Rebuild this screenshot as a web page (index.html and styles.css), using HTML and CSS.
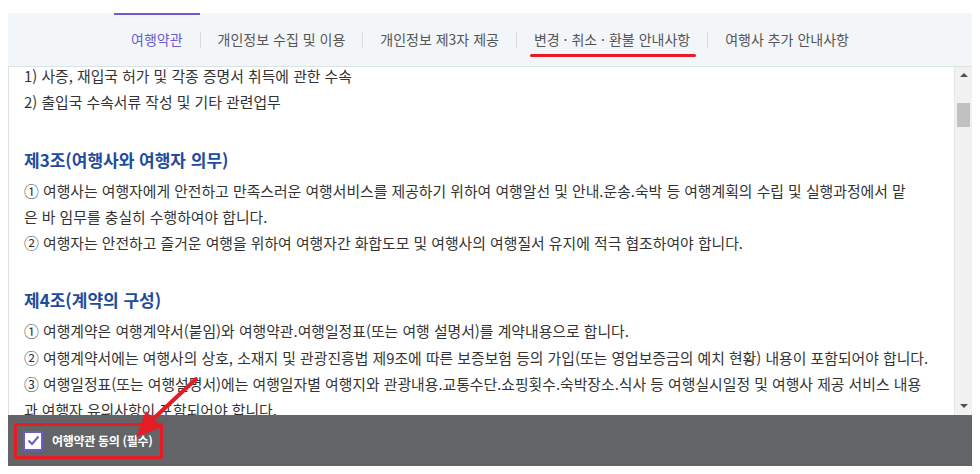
FILE: index.html
```html
<!DOCTYPE html>
<html lang="ko">
<head>
    <meta charset="UTF-8">
    <title>여행약관</title>
    <link rel="stylesheet" href="styles.css">
</head>
<body>
<div class="terms">
    <div class="tabs">
        <a class="tab active">여행약관</a>
        <span class="sep"></span>
        <a class="tab">개인정보 수집 및 이용</a>
        <span class="sep"></span>
        <a class="tab">개인정보 제3자 제공</a>
        <span class="sep"></span>
        <a class="tab marked">변경 · 취소 · 환불 안내사항</a>
        <span class="sep"></span>
        <a class="tab">여행사 추가 안내사항</a>
    </div>
    <div class="body">
        <div class="scroll">
            <div class="text">
                <p>1) 사증, 재입국 허가 및 각종 증명서 취득에 관한 수속</p>
                <p>2) 출입국 수속서류 작성 및 기타 관련업무</p>
                <h3>제3조(여행사와 여행자 의무)</h3>
                <p>① 여행사는 여행자에게 안전하고 만족스러운 여행서비스를 제공하기 위하여 여행알선 및 안내.운송.숙박 등 여행계획의 수립 및 실행과정에서 맡<br>은 바 임무를 충실히 수행하여야 합니다.</p>
                <p>② 여행자는 안전하고 즐거운 여행을 위하여 여행자간 화합도모 및 여행사의 여행질서 유지에 적극 협조하여야 합니다.</p>
                <h3>제4조(계약의 구성)</h3>
                <p>① 여행계약은 여행계약서(붙임)와 여행약관.여행일정표(또는 여행 설명서)를 계약내용으로 합니다.</p>
                <p>② 여행계약서에는 여행사의 상호, 소재지 및 관광진흥법 제9조에 따른 보증보험 등의 가입(또는 영업보증금의 예치 현황) 내용이 포함되어야 합니다.</p>
                <p>③ 여행일정표(또는 여행설명서)에는 여행일자별 여행지와 관광내용.교통수단.쇼핑횟수.숙박장소.식사 등 여행실시일정 및 여행사 제공 서비스 내용<br>과 여행자 유의사항이 포함되어야 합니다.</p>
            </div>
        </div>
        <div class="scrollbar">
            <span class="arrow up"></span>
            <span class="thumb"></span>
            <span class="arrow down"></span>
        </div>
    </div>
    <div class="agree">
        <label class="check">
            <span class="box">
                <svg width="13" height="11" viewBox="0 0 13 11"><path d="M1.5 5.5l3.5 3.5 6.5-7.5" fill="none" stroke="#6b5bd2" stroke-width="2"/></svg>
            </span>
            여행약관 동의 (필수)
        </label>
        <span class="highlight"></span>
    </div>
    <svg class="pointer" width="80" height="70" viewBox="0 0 80 70">
        <line x1="74" y1="3" x2="30" y2="44" stroke="#e51c23" stroke-width="4" stroke-linecap="round"/>
        <polygon points="14,61 24,35 40,51" fill="#e51c23"/>
    </svg>
</div>
</body>
</html>
```

FILE: styles.css
```css
body {
    margin: 13px 8px 0 8px;
    font-family: "Noto Sans CJK KR", "Noto Sans", sans-serif;
    background: #fff;
}
.terms {
    position: relative;
}
.tabs {
    display: flex;
    justify-content: center;
    align-items: center;
    height: 53px;
    background: #f3f6f9;
    border-bottom: 1px solid #dbe2e6;
}
.tab {
    position: relative;
    height: 53px;
    line-height: 53px;
    padding: 0 17px;
    font-size: 14px;
    color: #555;
    white-space: nowrap;
}
.tab.active {
    color: #6b5bd2;
}
.tab.active::before {
    content: "";
    position: absolute;
    left: 0;
    right: 0;
    top: 0;
    height: 2px;
    background: #6b5bd2;
}
.tab.marked::after {
    content: "";
    position: absolute;
    left: 13px;
    right: 11px;
    top: 41px;
    height: 3px;
    border-radius: 2px;
    background: #e51c23;
}
.sep {
    width: 1px;
    height: 16px;
    background: #d7dce0;
}
.body {
    display: flex;
    height: 348px;
    border-left: 1px solid #dbe2e6;
}
.scroll {
    flex: 1;
    overflow: hidden;
}
.text {
    margin-top: -4px;
    padding-left: 15px;
    font-size: 14.85px;
    color: #333;
}
.text p {
    margin: 0;
    line-height: 26.3px;
    white-space: nowrap;
}
.text h3 {
    margin: 31px 0 5px;
    font-size: 17px;
    line-height: 26px;
    color: #1f4b9b;
}
.scrollbar {
    position: relative;
    width: 17px;
    background: #f1f1f1;
    border-left: 1px solid #e6e6e6;
}
.thumb {
    position: absolute;
    left: 2px;
    right: 2px;
    top: 36px;
    height: 24px;
    background: #c1c1c1;
}
.arrow {
    position: absolute;
    left: 5px;
    width: 0;
    height: 0;
    border-left: 4px solid transparent;
    border-right: 4px solid transparent;
}
.arrow.up {
    top: 6px;
    border-bottom: 4px solid #505050;
}
.arrow.down {
    bottom: 7px;
    border-top: 4px solid #505050;
}
.agree {
    position: relative;
    display: flex;
    align-items: center;
    height: 51px;
    padding-left: 15px;
    background: #636468;
}
.check {
    display: flex;
    align-items: center;
    gap: 9px;
    font-size: 12px;
    font-weight: bold;
    letter-spacing: -0.3px;
    color: #fff;
}
.box {
    display: flex;
    align-items: center;
    justify-content: center;
    width: 16px;
    height: 16px;
    background: #fff;
    border: 2px solid #6b5bd2;
    border-radius: 2px;
}
.highlight {
    position: absolute;
    left: 6px;
    top: 8px;
    width: 143px;
    height: 30px;
    border: 3px solid #e51c23;
    border-radius: 2px;
}
.pointer {
    position: absolute;
    left: 114px;
    top: 363px;
}
```
